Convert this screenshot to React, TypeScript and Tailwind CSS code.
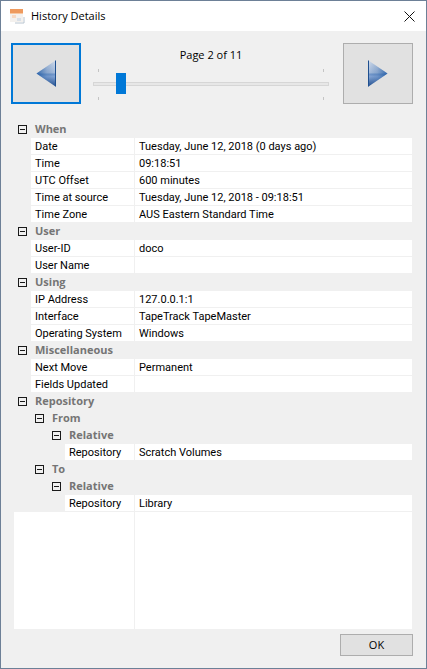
import React from "react";

type Row =
  | { kind: "head"; level: number; label: string }
  | { kind: "item"; level: number; label: string; value?: string };

const ROWS: Row[] = [
  { kind: "head", level: 0, label: "When" },
  { kind: "item", level: 0, label: "Date", value: "Tuesday, June 12, 2018 (0 days ago)" },
  { kind: "item", level: 0, label: "Time", value: "09:18:51" },
  { kind: "item", level: 0, label: "UTC Offset", value: "600 minutes" },
  { kind: "item", level: 0, label: "Time at source", value: "Tuesday, June 12, 2018 - 09:18:51" },
  { kind: "item", level: 0, label: "Time Zone", value: "AUS Eastern Standard Time" },
  { kind: "head", level: 0, label: "User" },
  { kind: "item", level: 0, label: "User-ID", value: "doco" },
  { kind: "item", level: 0, label: "User Name" },
  { kind: "head", level: 0, label: "Using" },
  { kind: "item", level: 0, label: "IP Address", value: "127.0.0.1:1" },
  { kind: "item", level: 0, label: "Interface", value: "TapeTrack TapeMaster" },
  { kind: "item", level: 0, label: "Operating System", value: "Windows" },
  { kind: "head", level: 0, label: "Miscellaneous" },
  { kind: "item", level: 0, label: "Next Move", value: "Permanent" },
  { kind: "item", level: 0, label: "Fields Updated" },
  { kind: "head", level: 0, label: "Repository" },
  { kind: "head", level: 1, label: "From" },
  { kind: "head", level: 2, label: "Relative" },
  { kind: "item", level: 2, label: "Repository", value: "Scratch Volumes" },
  { kind: "head", level: 1, label: "To" },
  { kind: "head", level: 2, label: "Relative" },
  { kind: "item", level: 2, label: "Repository", value: "Library" },
];

const INDENT = ["w-[17px]", "w-[34px]", "w-[51px]"];

function Minus() {
  return (
    <svg width="9" height="9" viewBox="0 0 9 9" className="shrink-0">
      <rect x="0.5" y="0.5" width="8" height="8" fill="none" stroke="#1a1a1a" />
      <path d="M2 4.5H7" stroke="#1a1a1a" />
    </svg>
  );
}

function Arrow({ flip }: { flip?: boolean }) {
  const id = flip ? "l" : "r";
  return (
    <svg width="20" height="27" viewBox="0 0 20 27" className={flip ? "-scale-x-100" : ""}>
      <defs>
        <linearGradient id={id + "a"} x1="0" y1="0" x2="0" y2="1">
          <stop offset="0" stopColor="#d3deed" />
          <stop offset="0.48" stopColor="#a5bcdc" />
          <stop offset="0.52" stopColor="#6f96ca" />
          <stop offset="0.62" stopColor="#85a6d6" />
          <stop offset="1" stopColor="#224f8f" />
        </linearGradient>
        <linearGradient id={id + "b"} x1="0" y1="0" x2="1" y2="0">
          <stop offset="0" stopColor="#1d4a86" stopOpacity="0" />
          <stop offset="0.45" stopColor="#2a5c9e" stopOpacity="0.25" />
          <stop offset="1" stopColor="#1d5aa6" stopOpacity="0.85" />
        </linearGradient>
      </defs>
      <path d="M0.5 0.5 L19.5 13.5 L0.5 26.5 Z" fill={`url(#${id}a)`} />
      <path d="M0.5 0.5 L19.5 13.5 L0.5 26.5 Z" fill={`url(#${id}b)`} />
      <path d="M0.5 0.5 V26.5" stroke="#1e4f8f" strokeWidth="1" />
    </svg>
  );
}

function CalendarIcon() {
  return (
    <svg width="16" height="16" viewBox="0 0 16 16" className="shrink-0">
      <rect x="1" y="1" width="13" height="13" fill="#f4f1ee" />
      <rect x="1" y="1" width="13" height="4" fill="#ee9a5e" />
      <rect x="1" y="5" width="13" height="1" fill="#f7c9a4" />
      <rect x="3" y="7" width="4" height="3" fill="#f6d9c4" />
      <rect x="8" y="10" width="4" height="3" fill="#d9e0e8" />
      <path d="M6 15H15V9" stroke="#b8c4cf" fill="none" />
    </svg>
  );
}

function TreeRow({ row }: { row: Row }) {
  if (row.kind === "head") {
    return (
      <div className="flex h-[17px] items-center pl-1">
        <div className={row.level === 0 ? "" : row.level === 1 ? "w-[17px]" : "w-[34px]"} />
        <Minus />
        <span className="ml-[8px] font-['Open_Sans',sans-serif] text-[11px] font-bold text-[#757575]">{row.label}</span>
      </div>
    );
  }
  return (
    <div className="flex h-[17px] pb-px">
      <div className={`${INDENT[row.level]} shrink-0`} />
      <div className="flex flex-1 items-center bg-white pl-1 pt-[2px]">{row.label}</div>
      <div className="ml-px flex w-[277px] shrink-0 items-center bg-white pl-1 pt-[2px]">{row.value}</div>
    </div>
  );
}

export default function App() {
  return (
    <div className="flex h-[669px] w-[427px] flex-col border border-[#6d8097] bg-[#f0f0f0] font-['Roboto',sans-serif] text-[11px] text-black">
      <div className="flex h-[30px] shrink-0 items-center bg-white pl-[8px]">
        <CalendarIcon />
        <span className="ml-[6px] font-['Open_Sans',sans-serif] text-[11px]">History Details</span>
        <svg width="11" height="11" viewBox="0 0 11 11" className="ml-auto mr-[11px]">
          <path d="M0.5 0.5L10.5 10.5M10.5 0.5L0.5 10.5" stroke="#111" strokeWidth="1" />
        </svg>
      </div>

      <div className="mt-[12px] flex h-[61px] shrink-0 pl-[10px] pr-[13px]">
        <button className="flex h-[61px] w-[70px] items-center justify-center border-2 border-[#0078d7] bg-[#e1e1e1]">
          <Arrow flip />
        </button>
        <div className="flex flex-1 flex-col items-center pr-[2px]">
          <div className="mt-[5px] h-[14px] font-['Open_Sans',sans-serif] leading-[14px]">Page 2 of 11</div>
          <div className="relative mx-auto mt-[6px] h-[31px] w-[236px]">
            <div className="absolute left-[5px] top-[1px] h-[3px] w-px bg-[#c4c4c4]" />
            <div className="absolute left-[230px] top-[1px] h-[3px] w-px bg-[#c4c4c4]" />
            <div className="absolute left-[5px] top-[29px] h-[3px] w-px bg-[#c4c4c4]" />
            <div className="absolute left-[230px] top-[29px] h-[3px] w-px bg-[#c4c4c4]" />
            <div className="absolute left-0 right-0 top-[14px] h-[4px] border border-[#d6d6d6] bg-[#e7e7e7]" />
            <div className="absolute left-[23px] top-[5px] h-[21px] w-[10px] bg-[#0078d7]" />
          </div>
        </div>
        <button className="flex h-[61px] w-[70px] items-center justify-center border border-[#adadad] bg-[#e1e1e1]">
          <Arrow />
        </button>
      </div>

      <div className="ml-[13px] mr-[14px] mt-[17px] flex min-h-0 flex-1 flex-col">
        {ROWS.map((r, i) => (
          <TreeRow key={i} row={r} />
        ))}
        <div className="flex h-[117px] shrink-0">
          <div className="flex-1 bg-white" />
          <div className="ml-px w-[277px] shrink-0 bg-white" />
        </div>
      </div>

      <div className="flex h-[39px] shrink-0 justify-end pr-[13px] pt-[5px]">
        <button className="h-[22px] w-[73px] border border-[#adadad] bg-[#e1e1e1] font-['Open_Sans',sans-serif] text-[11px]">OK</button>
      </div>
    </div>
  );
}
